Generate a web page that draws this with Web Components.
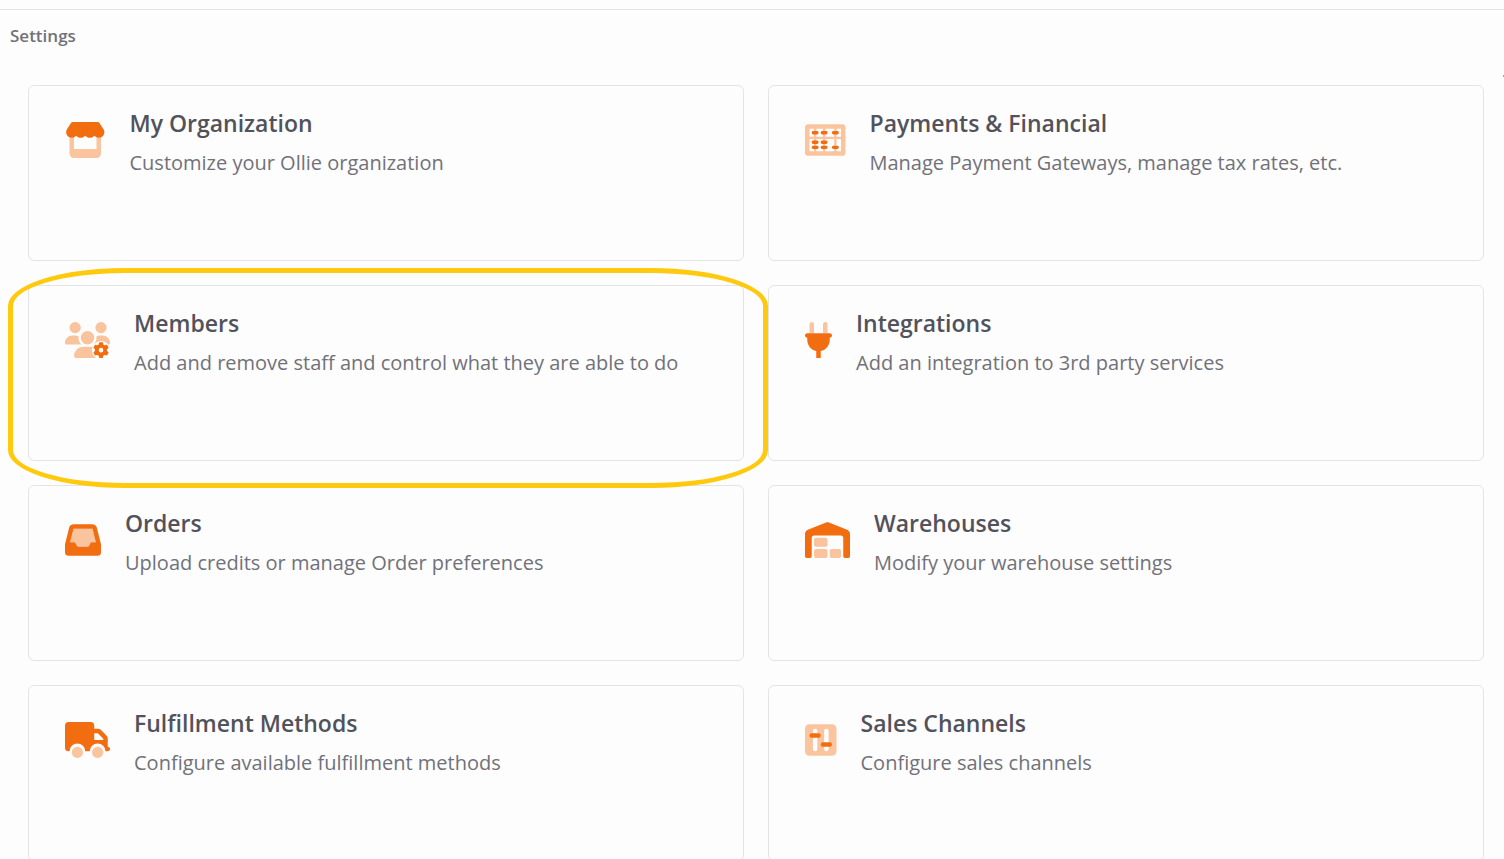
<!DOCTYPE html>
<html lang="en">
<head>
<meta charset="utf-8">
<title>Settings</title>
<style>
  html { background: #fdfdfd; scrollbar-width: none; }
  body { margin: 0; font-family: "Open Sans", "Noto Sans", sans-serif; color: #71717a; }
</style>
</head>
<body>
<settings-page heading="Settings">
  <settings-card icon="store" heading="My Organization">Customize your Ollie organization</settings-card>
  <settings-card icon="abacus" heading="Payments &amp; Financial">Manage Payment Gateways, manage tax rates, etc.</settings-card>
  <settings-card icon="members" heading="Members" marked>Add and remove staff and control what they are able to do</settings-card>
  <settings-card icon="plug" heading="Integrations">Add an integration to 3rd party services</settings-card>
  <settings-card icon="inbox" heading="Orders">Upload credits or manage Order preferences</settings-card>
  <settings-card icon="warehouse" heading="Warehouses">Modify your warehouse settings</settings-card>
  <settings-card icon="truck" heading="Fulfillment Methods">Configure available fulfillment methods</settings-card>
  <settings-card icon="sliders" heading="Sales Channels">Configure sales channels</settings-card>
</settings-page>

<script>
// Two-tone icons: [width on a 512-high grid, markup]; class "s" is the pale tone.
const ICONS = {
  store: [576, `<path d="M547.6 103.8L490.3 13.1C485.2 5 476.1 0 466.4 0H109.6C99.9 0 90.8 5 85.7 13.1L28.3 103.8c-29.6 46.8-3.4 111.9 51.9 119.4c4 .5 8.1 .8 12.1 .8c26.1 0 49.3-11.4 65.2-29c15.9 17.6 39.1 29 65.2 29c26.1 0 49.3-11.4 65.2-29c15.9 17.6 39.1 29 65.2 29c26.2 0 49.3-11.4 65.2-29c16 17.6 39.1 29 65.2 29c4.1 0 8.1-.3 12.1-.8c55.5-7.4 81.8-72.5 52.1-119.4z"/><path class="s" d="M512 222V448c0 35.3-28.7 64-64 64H128c-35.3 0-64-28.7-64-64V222c5 1.300 20 2 28.300 2c13 0 25-3 35.700-8V384H448V216c11 5 23 8 35.700 8c10 0 20-.5 28.300-2z"/>`],
  abacus: [576, `<path class="s" fill-rule="evenodd" d="M48 32H528a48 48 0 0 1 48 48V432a48 48 0 0 1-48 48H48a48 48 0 0 1-48-48V80a48 48 0 0 1 48-48zM64 96V208H128V96zM160 96V208H256V96zM288 96V208H416V96zM448 96V208H512V96zM64 240V416H128V240zM160 240V416H256V240zM288 240V416H416V240zM448 240V416H512V240z"/><g><rect x="96" y="128" width="96" height="48" rx="20"/><rect x="224" y="128" width="96" height="48" rx="20"/><rect x="384" y="128" width="96" height="48" rx="20"/><rect x="96" y="264" width="96" height="48" rx="20"/><rect x="224" y="264" width="96" height="48" rx="20"/><rect x="96" y="336" width="96" height="48" rx="20"/><rect x="224" y="336" width="96" height="48" rx="20"/><rect x="384" y="336" width="96" height="48" rx="20"/></g>`],
  members: [640, `<mask id="gap"><rect width="640" height="512" fill="#fff"/><circle cx="512" cy="400" r="130" fill="#000"/></mask><path class="s" mask="url(#gap)" d="M144 160A80 80 0 1 0 144 0a80 80 0 1 0 0 160zm368 0A80 80 0 1 0 512 0a80 80 0 1 0 0 160zM0 298.7C0 310.4 9.6 320 21.3 320H234.7c.2 0 .4 0 .7 0c-26.6-23.5-43.3-57.8-43.3-96c0-7.6 .7-15 1.9-22.3c-13.6-6.3-28.7-9.7-44.6-9.7H106.7C47.8 192 0 239.8 0 298.7zM320 320a96 96 0 1 0 0-192a96 96 0 1 0 0 192zM261.3 352C187.7 352 128 411.7 128 485.3c0 14.7 11.9 26.7 26.7 26.7H485.3V352zM533.3 192H490.7c-15.9 0-31 3.5-44.6 9.7c1.3 7.2 1.9 14.7 1.9 22.3c0 38.2-16.8 72.5-43.3 96H618.7c11.8 0 21.3-9.6 21.3-21.3C640 239.8 592.2 192 533.3 192z"/><g transform="translate(512 400)"><circle r="60" fill="none" stroke="currentColor" stroke-width="54"/><rect x="-30" y="-112" width="60" height="50" rx="14"/><rect x="-30" y="-112" width="60" height="50" rx="14" transform="rotate(60)"/><rect x="-30" y="-112" width="60" height="50" rx="14" transform="rotate(120)"/><rect x="-30" y="-112" width="60" height="50" rx="14" transform="rotate(180)"/><rect x="-30" y="-112" width="60" height="50" rx="14" transform="rotate(240)"/><rect x="-30" y="-112" width="60" height="50" rx="14" transform="rotate(300)"/></g>`],
  plug: [384, `<path class="s" d="M64 160V32a32 32 0 0 1 64 0V160zM256 160V32a32 32 0 0 1 64 0V160z"/><path d="M32 160c-17.7 0-32 14.3-32 32s14.3 32 32 32v32c0 77.4 55 142 128 156.8V512h64V412.8C297 398 352 333.4 352 256V224c17.7 0 32-14.3 32-32s-14.3-32-32-32z"/>`],
  inbox: [512, `<path class="s" d="M121 96H391l48 192H387.8c-12.1 0-23.2 6.8-28.6 17.7l-14.3 28.6c-5.4 10.8-16.5 17.7-28.6 17.7H195.8c-12.1 0-23.2-6.8-28.6-17.7l-14.3-28.6c-5.4-10.8-16.5-17.7-28.6-17.7H73z"/><path d="M121 32C91.6 32 66 52 58.9 80.5L1.9 308.4C.6 313.5 0 318.7 0 323.9V432c0 26.5 21.5 48 48 48H464c26.5 0 48-21.5 48-48V323.9c0-5.2-.6-10.4-1.9-15.5l-57-227.9C446 52 420.4 32 391 32H121zm0 64H391l48 192H387.8c-12.1 0-23.2 6.8-28.6 17.7l-14.3 28.6c-5.4 10.8-16.5 17.7-28.6 17.7H195.8c-12.1 0-23.2-6.8-28.6-17.7l-14.3-28.6c-5.4-10.8-16.5-17.7-28.6-17.7H73L121 96z"/>`],
  warehouse: [640, `<path d="M0 488V171.3c0-26.2 15.9-49.7 40.2-59.4L308.1 4.8c7.6-3.1 16.1-3.1 23.8 0L599.8 111.9c24.3 9.7 40.2 33.3 40.2 59.4V488c0 13.3-10.7 24-24 24H568c-13.3 0-24-10.7-24-24V224c0-17.7-14.3-32-32-32H128c-17.7 0-32 14.3-32 32V488c0 13.3-10.7 24-24 24H24c-13.3 0-24-10.7-24-24z"/><g class="s"><rect x="128" y="224" width="192" height="128" rx="28"/><rect x="128" y="384" width="192" height="128" rx="28"/><rect x="352" y="384" width="160" height="128" rx="28"/></g>`],
  truck: [640, `<path fill-rule="evenodd" d="M48 0C21.5 0 0 21.5 0 48V368c0 26.5 21.5 48 48 48H64A112 112 0 0 1 288 416H352A112 112 0 0 1 576 416h32c17.7 0 32-14.3 32-32s-14.3-32-32-32V237.3c0-17-6.7-33.3-18.7-45.3L512 114.7c-12-12-28.3-18.7-45.3-18.7H416V48c0-26.5-21.5-48-48-48H48zM416 160h50.7L544 237.3V256H416V160z"/><circle class="s" cx="176" cy="432" r="80"/><circle class="s" cx="464" cy="432" r="80"/>`],
  sliders: [448, `<path class="s" fill-rule="evenodd" d="M64 32H384a64 64 0 0 1 64 64V416a64 64 0 0 1-64 64H64a64 64 0 0 1-64-64V96a64 64 0 0 1 64-64zM144 96a32 32 0 0 0-32 32V384a32 32 0 0 0 64 0V128a32 32 0 0 0-32-32zM304 96a32 32 0 0 0-32 32V384a32 32 0 0 0 64 0V128a32 32 0 0 0-32-32z"/><rect x="64" y="160" width="160" height="64" rx="32"/><rect x="224" y="288" width="160" height="64" rx="32"/>`]
};

customElements.define('duotone-icon', class extends HTMLElement {
  connectedCallback() {
    const [width, art] = ICONS[this.getAttribute('name')];
    this.attachShadow({ mode: 'open' }).innerHTML = `
      <style>
        :host { display: block; flex: none; color: #f26d0f; }
        svg { display: block; height: 36px; fill: currentColor; }
        .s { opacity: .4; }
      </style>
      <svg viewBox="0 0 ${width} 512" aria-hidden="true">${art}</svg>`;
  }
});

customElements.define('settings-card', class extends HTMLElement {
  connectedCallback() {
    this.attachShadow({ mode: 'open' }).innerHTML = `
      <style>
        :host { display: block; position: relative; }
        a {
          box-sizing: border-box; display: flex; align-items: flex-start; gap: 24px;
          min-height: 176px; padding: 21px 36px;
          border: 1px solid #e4e4e7; border-radius: 6px;
          color: inherit; text-decoration: none;
        }
        duotone-icon { margin-top: 15px; }
        h2 { margin: 0 0 9px; font-size: 23px; line-height: 32px; font-weight: 600; color: #52525b; }
        p { margin: 0; font-size: 20px; line-height: 30px; }
        .ring { display: none; }
        /* Hand-drawn highlight that overlaps the neighbouring cards */
        :host([marked]) .ring {
          display: block; position: absolute; z-index: 1; inset: -17px -24px -27px -20px;
          border: 5px solid #ffc90e; border-radius: 116px / 38px; pointer-events: none;
        }
      </style>
      <a href="#">
        <duotone-icon name="${this.getAttribute('icon')}"></duotone-icon>
        <div><h2></h2><p><slot></slot></p></div>
      </a>
      <div class="ring"></div>`;
    this.shadowRoot.querySelector('h2').textContent = this.getAttribute('heading');
  }
});

customElements.define('settings-page', class extends HTMLElement {
  connectedCallback() {
    this.attachShadow({ mode: 'open' }).innerHTML = `
      <style>
        :host { display: block; position: relative; padding-top: 9px; }
        header { border-top: 1px solid #e4e4e7; padding: 14px 10px; }
        h1 { margin: 0; font-size: 17px; line-height: 24px; font-weight: 600; }
        main { display: grid; grid-template-columns: 1fr 1fr; gap: 24px; padding: 23px 20px 24px 28px; }
        /* Tip of the scroll arrow at the window's edge */
        .tip { position: absolute; right: 0; top: 75px; width: 1px; height: 2px; background: #a3a3a3; }
      </style>
      <header><h1></h1></header>
      <main><slot></slot></main>
      <div class="tip"></div>`;
    this.shadowRoot.querySelector('h1').textContent = this.getAttribute('heading');
  }
});
</script>
</body>
</html>
